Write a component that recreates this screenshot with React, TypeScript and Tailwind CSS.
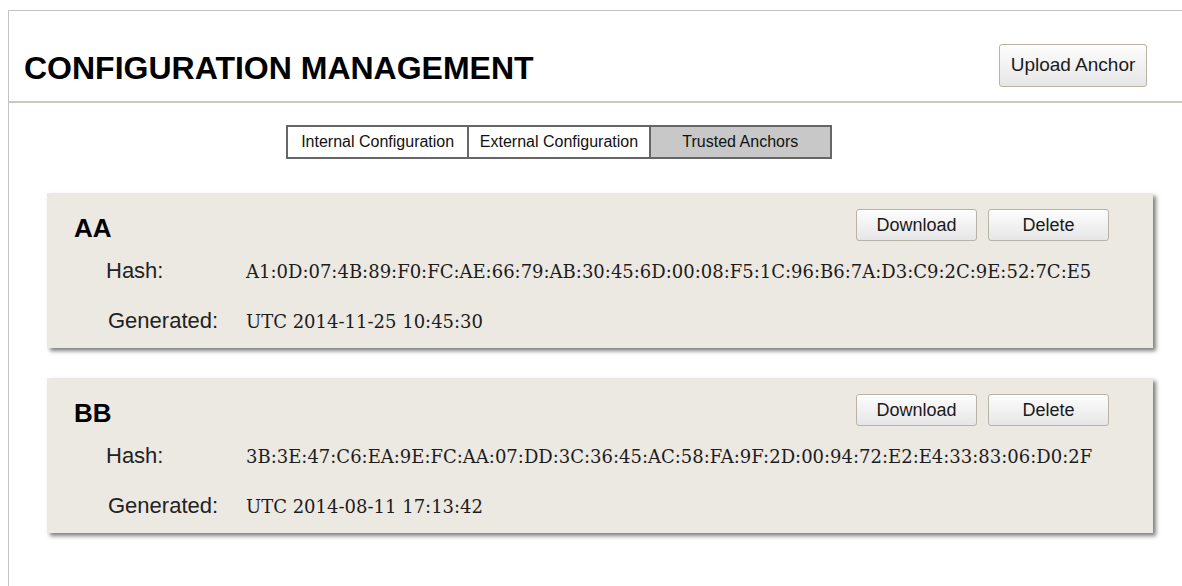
const sans = { fontFamily: '"Liberation Sans", Arial, sans-serif' }
const serif = { fontFamily: '"DejaVu Serif", Georgia, serif' }

const btnCls =
  "rounded-[3px] border border-[#b9b2a6] bg-gradient-to-b from-[#fdfdfd] to-[#e6e6e6] text-[#1a1a1a] shadow-[inset_0_1px_0_#ffffff]"

type Anchor = { name: string; hash: string; generated: string }

const anchors: Anchor[] = [
  {
    name: "AA",
    hash: "A1:0D:07:4B:89:F0:FC:AE:66:79:AB:30:45:6D:00:08:F5:1C:96:B6:7A:D3:C9:2C:9E:52:7C:E5",
    generated: "UTC 2014-11-25 10:45:30",
  },
  {
    name: "BB",
    hash: "3B:3E:47:C6:EA:9E:FC:AA:07:DD:3C:36:45:AC:58:FA:9F:2D:00:94:72:E2:E4:33:83:06:D0:2F",
    generated: "UTC 2014-08-11 17:13:42",
  },
]

const tabs = ["Internal Configuration", "External Configuration", "Trusted Anchors"]

function AnchorCard({ anchor }: { anchor: Anchor }) {
  return (
    <div className="ml-[38px] mr-[29px] bg-[#ece9e3] pl-[27px] pr-[44px] pt-[16px] pb-[12px] shadow-[3px_3px_4px_rgba(0,0,0,0.5)]">
      <div className="flex items-start justify-between">
        <h2 className="mt-[4px] text-[26px] leading-[30px] font-bold text-black">{anchor.name}</h2>
        <div className="flex gap-[11px]">
          <button className={`${btnCls} h-[32px] w-[121px] text-[18px]`}>Download</button>
          <button className={`${btnCls} h-[32px] w-[121px] text-[18px]`}>Delete</button>
        </div>
      </div>
      <div className="ml-[32px] mt-[14px] flex items-baseline leading-[28px]">
        <span className="w-[140px] text-[22px] text-[#222]">Hash:</span>
        <span className="text-[18px] text-[#1c1c1c]" style={serif}>
          {anchor.hash}
        </span>
      </div>
      <div className="ml-[34px] mt-[21px] flex items-baseline leading-[28px]">
        <span className="w-[138px] text-[22px] text-[#222]">Generated:</span>
        <span className="text-[18px] text-[#1c1c1c]" style={serif}>
          {anchor.generated}
        </span>
      </div>
    </div>
  )
}

export default function App() {
  return (
    <div className="min-h-screen bg-white pl-2 pt-[10px]" style={sans}>
      <div className="min-h-[576px] border-l border-t border-[#c4c4c4]">
        {/* page header */}
        <div className="flex h-[92px] items-start justify-between border-b-2 border-[#ccc8c0] pl-[15px] pr-[35px]">
          <h1 className="mt-[39px] text-[32px] leading-[37px] font-bold text-black">CONFIGURATION MANAGEMENT</h1>
          <button className={`${btnCls} mt-[33px] h-[43px] w-[148px] text-[19px]`}>Upload Anchor</button>
        </div>

        {/* tabs */}
        <div className="ml-[277px] mt-[22px] flex h-[34px] w-[546px] border-2 border-[#666]">
          {tabs.map((t, i) => (
            <div
              key={t}
              className={`flex flex-1 items-center justify-center text-[16px] text-[#111] ${
                i > 0 ? "border-l-2 border-[#666]" : ""
              } ${i === 2 ? "bg-[#c8c8c8]" : "bg-white"}`}
            >
              {t}
            </div>
          ))}
        </div>

        <div className="mt-[34px] flex flex-col gap-[30px]">
          {anchors.map((a) => (
            <AnchorCard key={a.name} anchor={a} />
          ))}
        </div>
      </div>
    </div>
  )
}
